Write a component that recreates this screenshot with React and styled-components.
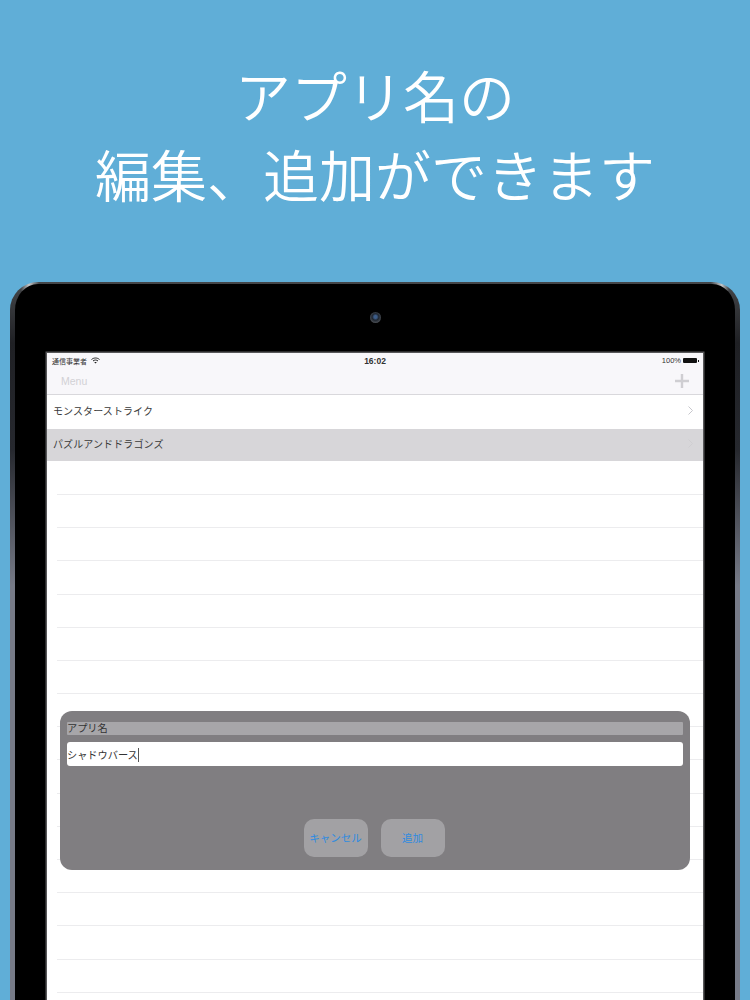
import React from 'react';
import styled, { createGlobalStyle } from 'styled-components';

const JP = '"Noto Sans CJK JP", "Noto Sans", sans-serif';
const SANS = '"Liberation Sans", "Noto Sans CJK JP", sans-serif';

const GlobalStyle = createGlobalStyle`
  html, body {
    margin: 0;
    padding: 0;
    height: 1000px;
    overflow: hidden;
    background: #60aed7;
  }
`;

const Page = styled.div`
  width: 750px;
  height: 1000px;
  overflow: hidden;
  background: #60aed7;
  display: flex;
  flex-direction: column;
`;

const Heading = styled.h1`
  flex: none;
  margin: 0;
  height: 282px;
  padding-top: 54px;
  box-sizing: border-box;
  text-align: center;
  color: #fff;
  font-family: ${JP};
  font-weight: 350;
  font-size: 56px;
  line-height: 79px;
  white-space: nowrap;
`;

const Tablet = styled.div`
  flex: none;
  width: 730px;
  height: 760px;
  margin-left: 10px;
  box-sizing: border-box;
  padding: 69px 32px 0;
  border: 5px solid transparent;
  border-top-width: 2px;
  border-bottom: 0;
  border-radius: 28px 28px 0 0;
  position: relative;
  background:
    linear-gradient(#000, #000) padding-box,
    linear-gradient(
        90deg,
        transparent 1.5%,
        #c4c6c8 2.6%,
        transparent 4%,
        transparent 96%,
        #c4c6c8 97.5%,
        transparent 98.5%
      )
      border-box,
    linear-gradient(180deg, #45474a 0, #1f2024 8%, #26282e 22%, #777b88 40%, #777b88 100%) border-box;
`;

const Camera = styled.div`
  position: absolute;
  left: 354.5px;
  top: 28px;
  width: 11px;
  height: 11px;
  border-radius: 50%;
  background: radial-gradient(circle at 50% 45%, #3c5c88 0 18%, #1f2630 40%, #5a5d62 85%);
`;

const Screen = styled.div`
  position: relative;
  width: 656px;
  height: 700px;
  background: #fff;
  box-shadow: 0 0 0 1.5px #58585a;
  font-family: ${JP};
`;

const Header = styled.header`
  height: 41.4px;
  background: #f8f7fa;
  border-bottom: 1px solid #d9d8dc;
  display: flex;
  flex-direction: column;
`;

const StatusBar = styled.div`
  height: 15px;
  padding: 0 5px;
  display: grid;
  grid-template-columns: 1fr auto 1fr;
  align-items: center;
  color: #333;
  font-size: 7px;
`;

const StatusLeft = styled.div`
  display: flex;
  align-items: center;
  gap: 4px;
`;

const Clock = styled.div`
  font-family: ${SANS};
  font-weight: 700;
  font-size: 8.5px;
`;

const StatusRight = styled.div`
  display: flex;
  justify-content: flex-end;
  align-items: center;
  gap: 2px;
  font-family: ${SANS};
  font-size: 7.5px;
`;

const Battery = styled.div`
  width: 14px;
  height: 5px;
  background: #111;
  border-radius: 1px;
  margin-right: 1px;
  position: relative;

  &::after {
    content: '';
    position: absolute;
    right: -2px;
    top: 1.5px;
    width: 1px;
    height: 2px;
    background: #111;
  }
`;

const NavBar = styled.div`
  flex: 1;
  display: flex;
  align-items: center;
  justify-content: space-between;
  padding: 0 14px;
`;

const NavTitle = styled.span`
  font-family: ${SANS};
  font-size: 10.5px;
  color: #d2d1d5;
`;

const Rows = styled.div`
  display: flex;
  flex-direction: column;
`;

const Row = styled.div`
  height: ${props => (props.$selected ? '32.6px' : '33.2px')};
  margin-bottom: ${props => (props.$selected ? '0.6px' : '0')};
  box-sizing: border-box;
  display: flex;
  align-items: center;
  justify-content: space-between;
  padding: 0 10px 2px 6px;
  font-size: 10px;
  letter-spacing: 0.1px;
  color: #3a3a3a;
  background: ${props => (props.$selected ? '#d7d6d9' : '#fff')};
  position: relative;

  &::after {
    content: '';
    position: absolute;
    left: 10px;
    right: 0;
    bottom: 0;
    height: 1px;
    background: ${props => (props.$filled ? 'transparent' : '#ececee')};
  }
`;

const Dialog = styled.div`
  position: absolute;
  left: 13px;
  top: 358px;
  width: 630px;
  height: 159px;
  box-sizing: border-box;
  padding: 11px 7px 13px;
  border-radius: 12px;
  background: #807e81;
  display: flex;
  flex-direction: column;
`;

const FieldLabel = styled.div`
  height: 13px;
  line-height: 11px;
  background: #a7a6a9;
  color: #333;
  font-size: 10.2px;
  border-radius: 1px;
`;

const Field = styled.div`
  height: 24px;
  margin-top: 7px;
  background: #fff;
  border-radius: 3px;
  color: #333;
  font-size: 10.2px;
  display: flex;
  align-items: center;
  padding-top: 1px;
  box-sizing: border-box;
`;

const Caret = styled.span`
  width: 1px;
  height: 14px;
  background: #555;
`;

const Actions = styled.div`
  margin-top: auto;
  display: flex;
  justify-content: center;
  gap: 13px;
  padding-right: 2px;
`;

const ActionButton = styled.button`
  width: 64px;
  height: 38px;
  padding: 0 0 2px;
  border: 0;
  border-radius: 10px;
  background: #a2a1a4;
  color: #2f8be0;
  font-family: ${JP};
  font-size: 10.5px;
`;

const WifiIcon = () => (
  <svg width="9" height="7" viewBox="0 0 18 14" fill="none" stroke="#222" strokeWidth="2">
    <path d="M1 5c4.5-4 11.500-4 16 0" />
    <path d="M4 8c3-2.600 7-2.600 10 0" />
    <path d="M9 13l-2.500-2.500c1.500-1 3.500-1 5 0z" fill="#222" stroke="none" />
  </svg>
);

const PlusIcon = () => (
  <svg width="14" height="14" viewBox="0 0 14 14" fill="none" stroke="#cfced2" strokeWidth="2.400">
    <path d="M7 0v14M0 7h14" />
  </svg>
);

const ChevronIcon = ({ color }) => (
  <svg width="5" height="9" viewBox="0 0 5 9" fill="none" stroke={color} strokeWidth="1">
    <path d="M.5.5l4 4-4 4" />
  </svg>
);

const apps = [
  { name: 'モンスターストライク', chevron: '#c7c7cc' },
  { name: 'パズルアンドドラゴンズ', chevron: '#cfced1', selected: true },
];
const emptyRows = Array.from({ length: 16 }, (_, i) => i);

const App = () => (
  <Page>
    <GlobalStyle />
    <Heading>
      アプリ名の
      <br />
      編集、追加ができます
    </Heading>
    <Tablet>
      <Camera />
      <Screen>
        <Header>
          <StatusBar>
            <StatusLeft>
              通信事業者
              <WifiIcon />
            </StatusLeft>
            <Clock>16:02</Clock>
            <StatusRight>
              100%
              <Battery />
            </StatusRight>
          </StatusBar>
          <NavBar>
            <NavTitle>Menu</NavTitle>
            <PlusIcon />
          </NavBar>
        </Header>
        <Rows>
          {apps.map(app => (
            <Row key={app.name} $filled $selected={app.selected}>
              {app.name}
              <ChevronIcon color={app.chevron} />
            </Row>
          ))}
          {emptyRows.map(i => (
            <Row key={i} />
          ))}
        </Rows>
        <Dialog>
          <FieldLabel>アプリ名</FieldLabel>
          <Field>
            シャドウバース
            <Caret />
          </Field>
          <Actions>
            <ActionButton>キャンセル</ActionButton>
            <ActionButton>追加</ActionButton>
          </Actions>
        </Dialog>
      </Screen>
    </Tablet>
  </Page>
);

export default App;
